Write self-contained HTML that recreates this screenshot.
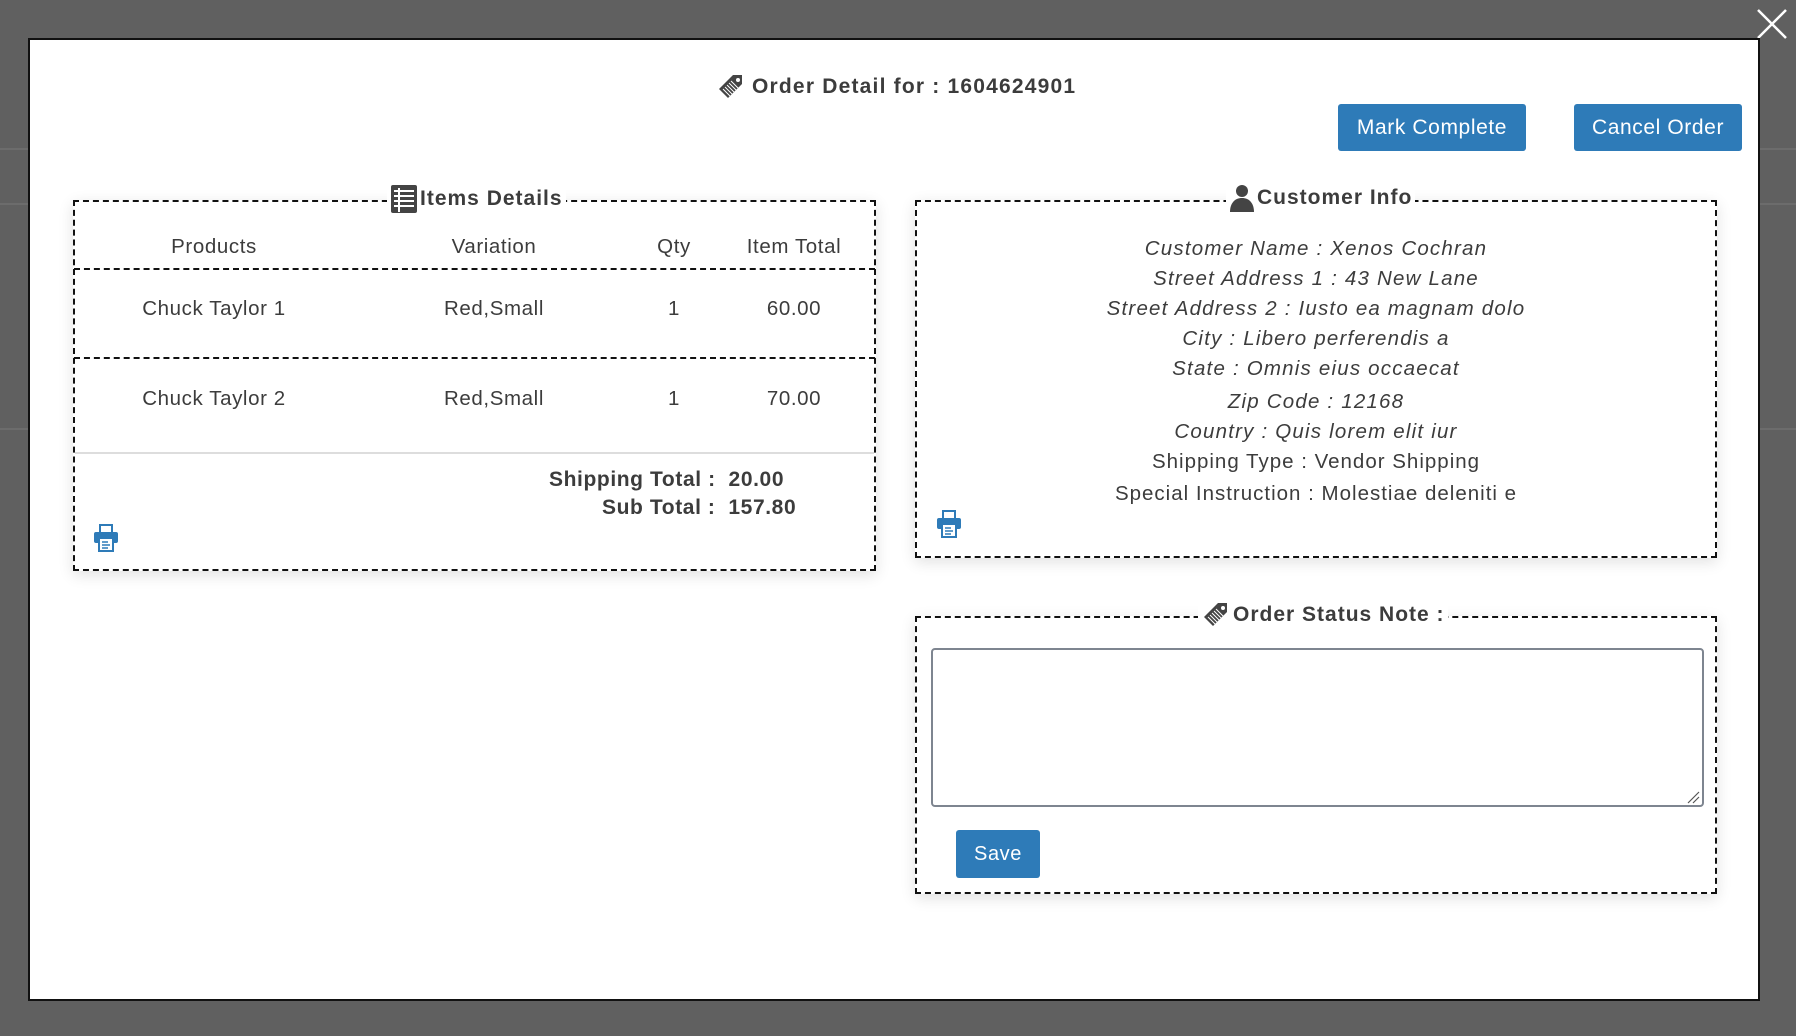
<!DOCTYPE html>
<html><head><meta charset="utf-8"><style>
*{box-sizing:border-box;margin:0;padding:0}
body{width:1796px;height:1036px;background:#606060;position:relative;overflow:hidden;font-family:"Liberation Sans",sans-serif;color:#3c3c3c;letter-spacing:0.6px}
.ln{position:absolute;left:0;right:0;height:2px;background:#6c6c6c}
.modal{position:absolute;left:28px;top:38px;width:1732px;height:963px;background:#fff;border:2px solid #111}
.a{position:absolute}
.t{position:absolute;white-space:nowrap;transform:translateX(-50%);font-size:20.5px}
.box{position:absolute;border:2px dashed #111;box-shadow:0 4px 14px rgba(0,0,0,.12);background:#fff}
.btn{position:absolute;background:#2e7bb8;color:#fff;border-radius:3px;font-size:21px;display:flex;align-items:center;justify-content:center}
.leg{position:absolute;background:#fff;font-weight:bold;font-size:21px;padding:0 3px;display:flex;align-items:center;gap:2px;white-space:nowrap}
.ci{font-style:italic}
</style></head><body>
<div class="ln" style="top:148px"></div>
<div class="ln" style="top:203px"></div>
<div class="ln" style="top:428px"></div>
<svg class="a" style="left:1756px;top:8px" width="32" height="32"><path d="M2 2L30 30M30 2L2 30" stroke="#fff" stroke-width="2.5"/></svg>
<div class="modal"></div>

<div class="a" style="left:716px;top:72px;display:flex;align-items:center;gap:6px;font-weight:bold;font-size:21px;letter-spacing:1.2px">
<svg width="30" height="30" viewBox="0 0 30 30"><path d="M3 17L17 3h9v9L12 26z" fill="#444"/><path d="M7 17l9 9M9 15l9 9M11 13l9 9M13 11l9 9M15 9l9 9" stroke="#fff" stroke-width="1"/><circle cx="22" cy="8" r="2" fill="#fff"/></svg>
Order Detail for : 1604624901</div>

<div class="btn" style="left:1338px;top:104px;width:188px;height:47px">Mark Complete</div>
<div class="btn" style="left:1574px;top:104px;width:168px;height:47px">Cancel Order</div>

<!-- Items -->
<div class="box" style="left:73px;top:200px;width:803px;height:371px"></div>
<div class="leg" style="left:387px;top:184px;letter-spacing:1px">
<svg width="28" height="30" viewBox="0 0 28 30"><rect x="1" y="1" width="26" height="28" rx="2" fill="#444"/><path d="M4 7h20M4 12h20M4 17h20M4 22h20" stroke="#fff" stroke-width="2"/><path d="M9 4v24" stroke="#fff" stroke-width="2"/></svg>Items Details</div>
<div class="t" style="left:214px;top:235px">Products</div>
<div class="t" style="left:494px;top:235px">Variation</div>
<div class="t" style="left:674px;top:235px">Qty</div>
<div class="t" style="left:794px;top:235px">Item Total</div>
<div class="a" style="left:74px;top:268px;width:801px;border-top:2px dashed #111"></div>
<div class="t" style="left:214px;top:297px">Chuck Taylor 1</div>
<div class="t" style="left:494px;top:297px">Red,Small</div>
<div class="t" style="left:674px;top:297px">1</div>
<div class="t" style="left:794px;top:297px">60.00</div>
<div class="a" style="left:74px;top:357px;width:801px;border-top:2px dashed #111"></div>
<div class="t" style="left:214px;top:387px">Chuck Taylor 2</div>
<div class="t" style="left:494px;top:387px">Red,Small</div>
<div class="t" style="left:674px;top:387px">1</div>
<div class="t" style="left:794px;top:387px">70.00</div>
<div class="a" style="left:75px;top:452px;width:799px;border-top:2px solid #ddd"></div>
<div class="a" style="left:549px;top:468px;font-weight:bold;font-size:21px">Shipping Total : &nbsp;20.00</div>
<div class="a" style="left:602px;top:496px;font-weight:bold;font-size:21px">Sub Total : &nbsp;157.80</div>
<svg class="a" style="left:93px;top:524px" width="26" height="28" viewBox="0 0 26 28"><rect x="7" y="1" width="12" height="8" fill="none" stroke="#2e7bb8" stroke-width="2"/><rect x="1" y="8" width="24" height="11" rx="2" fill="#2e7bb8"/><rect x="6" y="14" width="14" height="13" fill="#fff" stroke="#2e7bb8" stroke-width="2"/><path d="M9 18h6M9 21h8M9 24h6" stroke="#2e7bb8" stroke-width="1.5"/></svg>

<!-- Customer -->
<div class="box" style="left:915px;top:200px;width:802px;height:358px"></div>
<div class="leg" style="left:1226px;top:184px;letter-spacing:1px">
<svg width="26" height="28" viewBox="0 0 26 28"><circle cx="13" cy="7" r="6" fill="#444"/><path d="M1 28c0-9 5-14 12-14s12 5 12 14z" fill="#444"/></svg>Customer Info</div>
<div class="t ci" style="left:1316px;top:237px;letter-spacing:1.2px">Customer Name : Xenos Cochran</div>
<div class="t ci" style="left:1316px;top:267px;letter-spacing:1.2px">Street Address 1 : 43 New Lane</div>
<div class="t ci" style="left:1316px;top:297px;letter-spacing:1.2px">Street Address 2 : Iusto ea magnam dolo</div>
<div class="t ci" style="left:1316px;top:327px;letter-spacing:1.2px">City : Libero perferendis a</div>
<div class="t ci" style="left:1316px;top:357px;letter-spacing:1.2px">State : Omnis eius occaecat</div>
<div class="t ci" style="left:1316px;top:390px;letter-spacing:1.2px">Zip Code : 12168</div>
<div class="t ci" style="left:1316px;top:420px;letter-spacing:1.2px">Country : Quis lorem elit iur</div>
<div class="t" style="left:1316px;top:450px;letter-spacing:1px">Shipping Type : Vendor Shipping</div>
<div class="t" style="left:1316px;top:482px;letter-spacing:1px">Special Instruction : Molestiae deleniti e</div>
<svg class="a" style="left:936px;top:510px" width="26" height="28" viewBox="0 0 26 28"><rect x="7" y="1" width="12" height="8" fill="none" stroke="#2e7bb8" stroke-width="2"/><rect x="1" y="8" width="24" height="11" rx="2" fill="#2e7bb8"/><rect x="6" y="14" width="14" height="13" fill="#fff" stroke="#2e7bb8" stroke-width="2"/><path d="M9 18h6M9 21h8M9 24h6" stroke="#2e7bb8" stroke-width="1.5"/></svg>

<!-- Status note -->
<div class="box" style="left:915px;top:616px;width:802px;height:278px"></div>
<div class="leg" style="left:1198px;top:600px;letter-spacing:1px">
<svg width="30" height="30" viewBox="0 0 30 30"><path d="M3 17L17 3h9v9L12 26z" fill="#444"/><path d="M7 17l9 9M9 15l9 9M11 13l9 9M13 11l9 9M15 9l9 9" stroke="#fff" stroke-width="1"/><circle cx="22" cy="8" r="2" fill="#fff"/></svg>Order Status Note :</div>
<div class="a" style="left:931px;top:648px;width:773px;height:159px;border:2px solid #7e8590;border-radius:4px"></div>
<svg class="a" style="left:1686px;top:790px" width="14" height="14"><path d="M2 13L13 2M7 13L13 7" stroke="#555" stroke-width="1.2"/></svg>
<div class="btn" style="left:956px;top:830px;width:84px;height:48px;font-size:20px">Save</div>
</body></html>
